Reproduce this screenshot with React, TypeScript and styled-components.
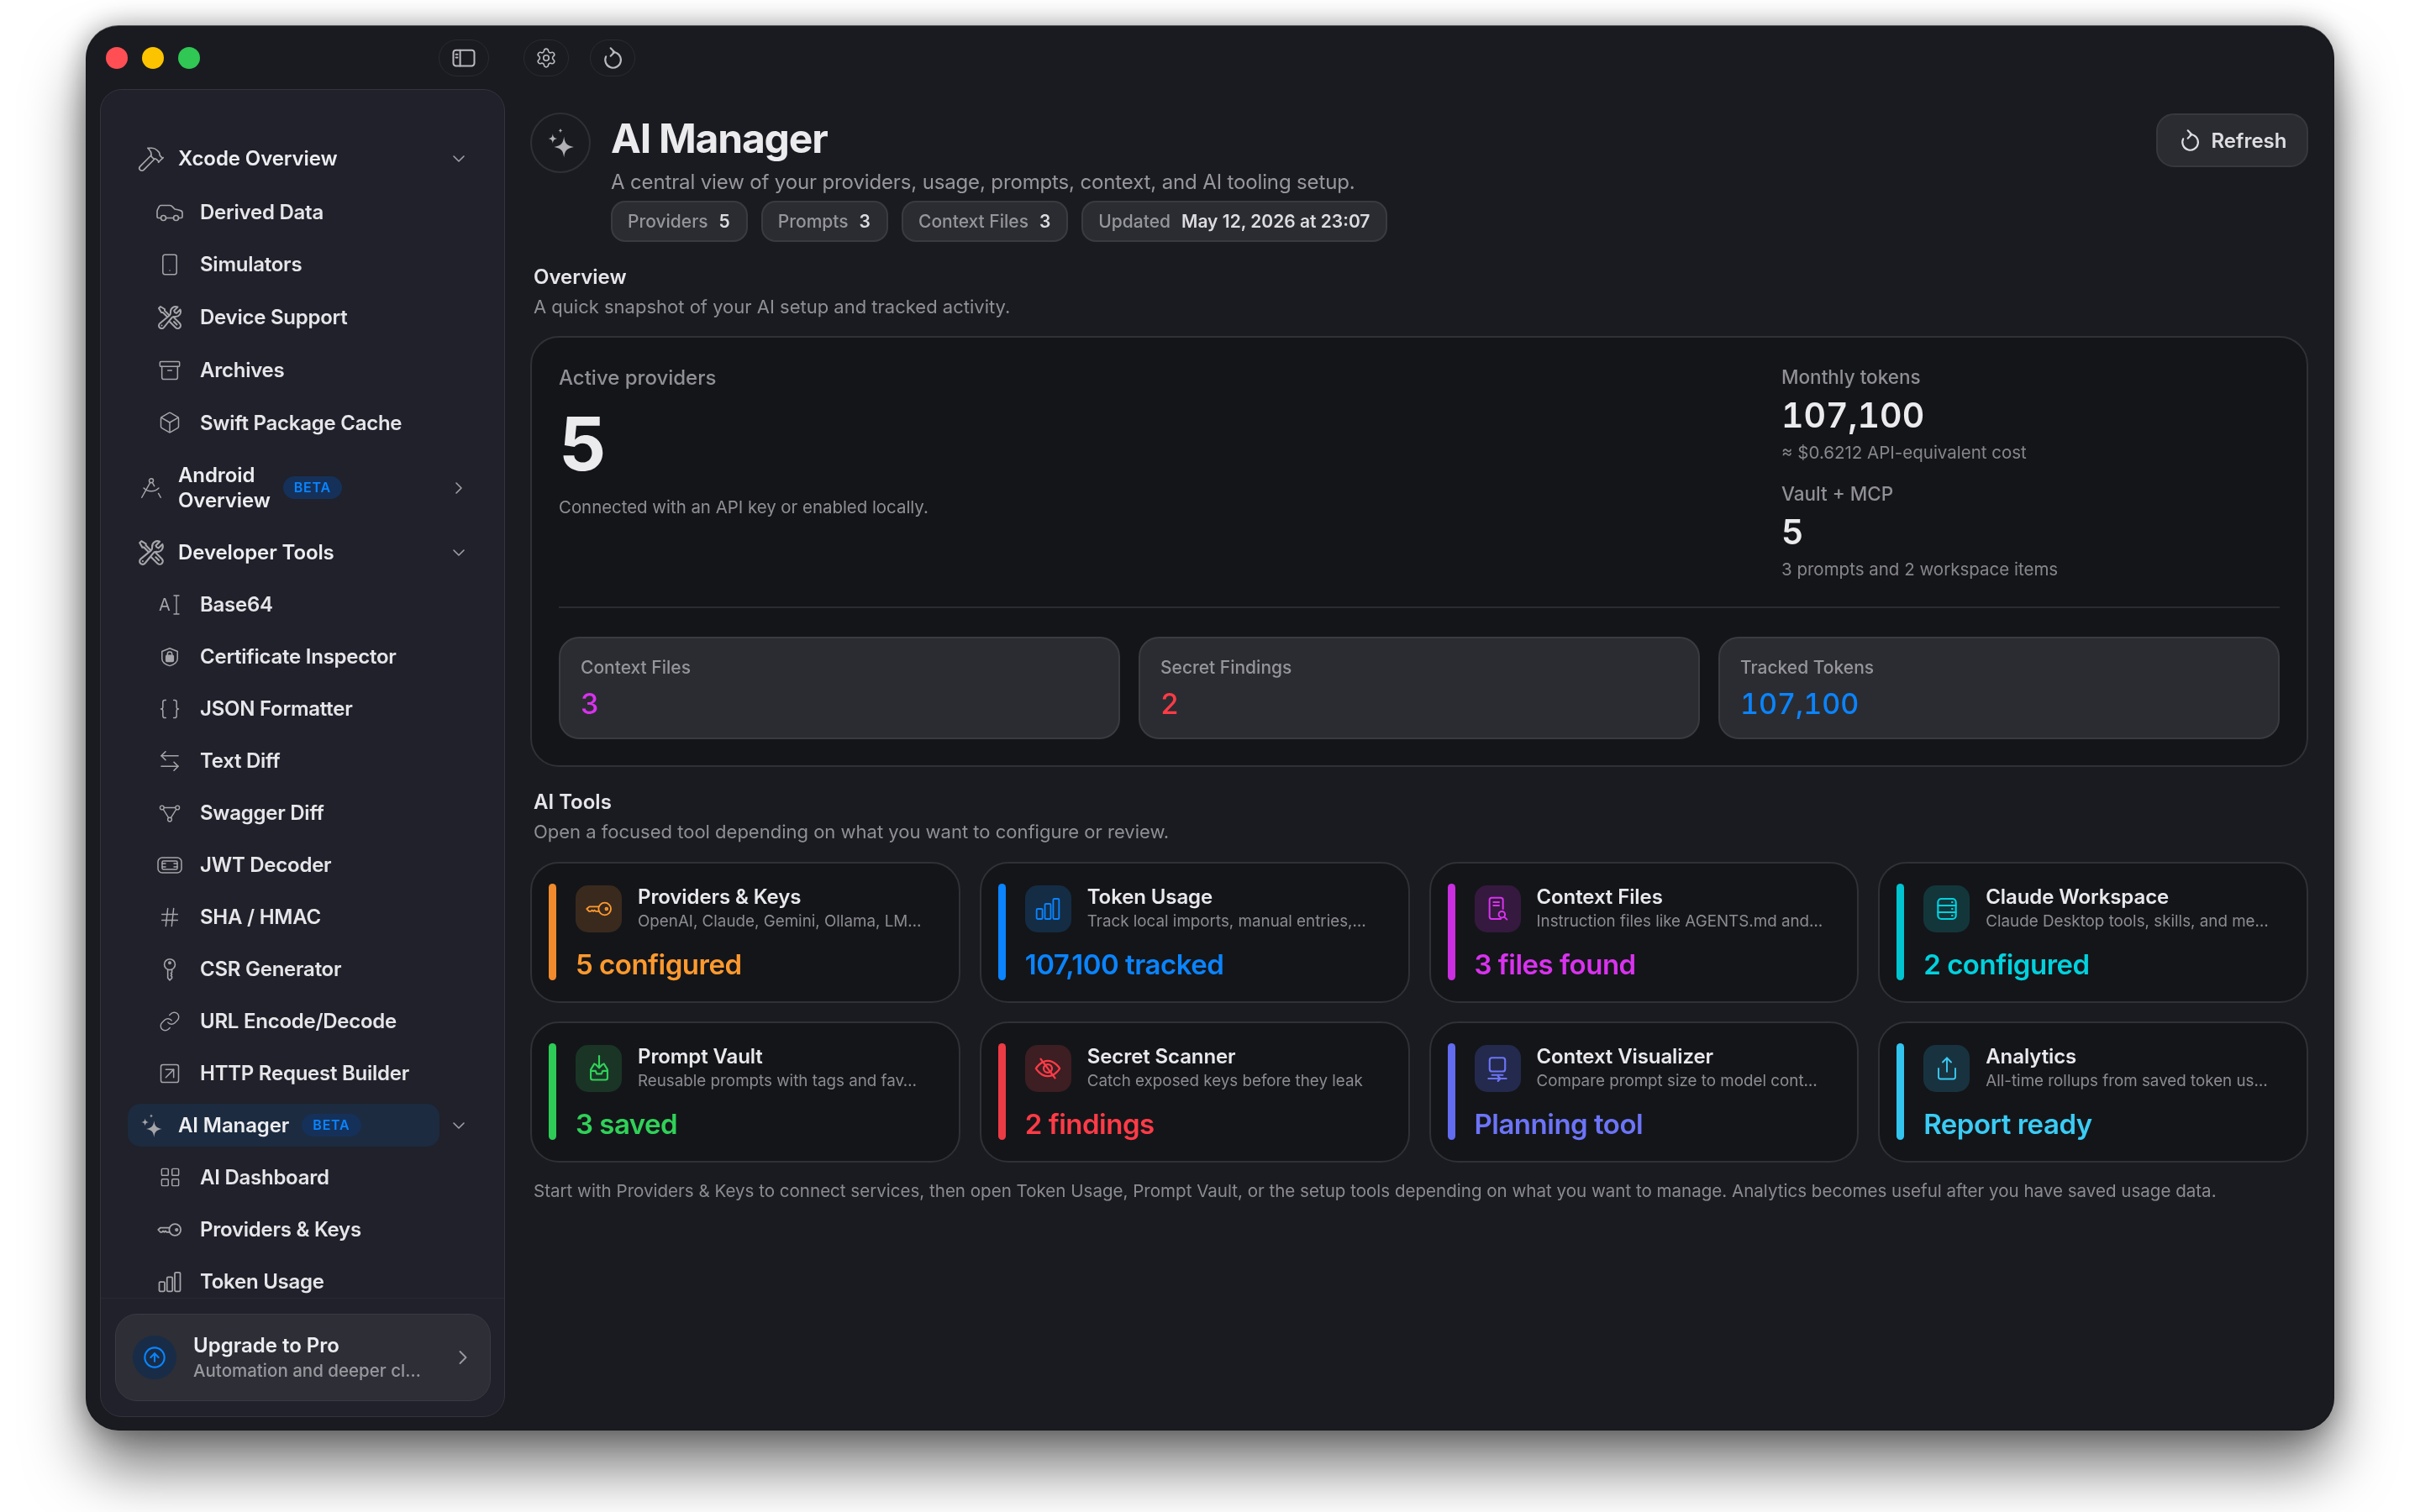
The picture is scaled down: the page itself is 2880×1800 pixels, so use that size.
import React from 'react';
import styled, { createGlobalStyle } from 'styled-components';
import {
  Archive,
  ArrowLeftRight,
  Box,
  Braces,
  Car,
  ChevronDown,
  ChevronRight,
  CircleArrowUp,
  DraftingCompass,
  Hammer,
  Hash,
  LayoutGrid,
  Link,
  Settings,
  Share,
  Smartphone,
  SquareArrowUpRight,
} from 'lucide-react';
import { HiOutlineWrenchScrewdriver } from 'react-icons/hi2';

const GlobalStyle = createGlobalStyle`
  html, body {
    margin: 0;
    padding: 0;
    background: #ffffff;
    font-family: Inter, "Noto Sans", sans-serif;
  }
  * { box-sizing: border-box; }
`;

type IconProps = { size?: number };

const Svg: React.FC<IconProps & { children: React.ReactNode; sw?: number }> = ({ size = 28, children, sw = 1.4 }) => (
  <svg
    width={size}
    height={size}
    viewBox="0 0 24 24"
    fill="none"
    stroke="currentColor"
    strokeWidth={sw}
    strokeLinecap="round"
    strokeLinejoin="round"
  >
    {children}
  </svg>
);

const SparklesIcon: React.FC<IconProps> = ({ size = 32 }) => (
  <svg width={size} height={size} viewBox="0 0 24 24" fill="currentColor">
    <path d="M14.5 7.5c.6 5 2 6.6 7 7.5-5 .9-6.4 2.5-7 7.5-.6-5-2-6.6-7-7.5 5-.9 6.4-2.5 7-7.5Z" />
    <path d="M6.5 5.5c.3 2.4 1 3.1 3.3 3.5-2.3.4-3 1.1-3.3 3.5-.3-2.4-1-3.1-3.3-3.5 2.3-.4 3-1.1 3.3-3.5Z" />
    <path d="M12 1.5c.15 1.2.5 1.6 1.6 1.8-1.1.2-1.45.6-1.6 1.8-.15-1.2-.5-1.6-1.6-1.8 1.1-.2 1.45-.6 1.6-1.8Z" />
  </svg>
);

const RefreshIcon: React.FC<IconProps> = ({ size = 30 }) => (
  <Svg size={size} sw={1.8}>
    <path d="M12.5 6a8 8 0 1 1-7.2 4.5" />
    <path d="m10 2 4 4-4 4" />
  </Svg>
);

const SidebarToggleIcon: React.FC = () => (
  <Svg size={30} sw={1.6}>
    <rect x="2" y="4.5" width="20" height="15" rx="2.5" />
    <path d="M8.5 4.5v15" />
    <path d="M4.5 8.5H6M4.5 11.5H6" />
  </Svg>
);

const KeyIcon: React.FC<IconProps & { upright?: boolean }> = ({ size = 30, upright }) => (
  <Svg size={size} sw={1.4}>
    <g transform={upright ? 'rotate(-90 12 12)' : undefined}>
      <circle cx="17" cy="12" r="5.5" />
      <circle cx="18.6" cy="12" r="1" />
      <path d="M11.8 10H3.2L1 12l2 2.2h1.6l1.1-1 1.1 1 1.1-1 1.1 1h3" />
    </g>
  </Svg>
);

const BarsIcon: React.FC<IconProps> = ({ size = 30 }) => (
  <Svg size={size} sw={1.4}>
    <rect x="2" y="12" width="5.2" height="9" rx="1" />
    <rect x="9.4" y="7.5" width="5.2" height="13.5" rx="1" />
    <rect x="16.8" y="3" width="5.2" height="18" rx="1" />
  </Svg>
);

const IBeamIcon: React.FC = () => (
  <svg width="26" height="28" viewBox="0 0 26 28" fill="none" stroke="currentColor" strokeWidth={1.4} strokeLinecap="round">
    <text x="0" y="21" fontSize="20" fontFamily="Inter, sans-serif" fill="currentColor" stroke="none">A</text>
    <path d="M18 3h6M21 3v22M18 25h6" />
  </svg>
);

const LockShieldIcon: React.FC = () => (
  <Svg size={26}>
    <path d="M12 2.5 20.5 6v8c0 3.8-3.5 6.2-8.5 7.8C7 20.2 3.5 17.8 3.5 14V6L12 2.5Z" />
    <rect x="8" y="10.5" width="8" height="6.5" rx="1" fill="currentColor" />
    <path d="M9.5 10.5V9a2.5 2.5 0 0 1 5 0v1.5" />
  </Svg>
);

const ConnectedIcon: React.FC = () => (
  <Svg size={26} sw={1.3}>
    <circle cx="3.5" cy="6" r="2.2" />
    <circle cx="20.5" cy="6" r="2.2" />
    <circle cx="12" cy="19" r="2.2" />
    <path d="M6 6h12M5 8l5.6 9M19 8l-5.6 9" />
  </Svg>
);

const TokenCardIcon: React.FC = () => (
  <svg width="30" height="24" viewBox="0 0 30 24" fill="none" stroke="currentColor" strokeWidth={1.5} strokeLinecap="round">
    <rect x="1" y="3" width="28" height="18" rx="5" />
    <rect x="6" y="7" width="18" height="10" rx="1.5" />
    <path d="M6 10h4M6 14h4M20 10h4M20 14h4" />
  </svg>
);

const DocSearchIcon: React.FC = () => (
  <Svg size={32} sw={1.5}>
    <path d="M15 21H7a2 2 0 0 1-2-2V4a2 2 0 0 1 2-2h8a2 2 0 0 1 2 2v8" />
    <path d="M8.5 6h5M8.5 9h5" />
    <circle cx="16" cy="17" r="2.8" />
    <path d="m18.2 19.2 2.3 2.3" />
  </Svg>
);

const RackIcon: React.FC = () => (
  <Svg size={32} sw={1.6}>
    <rect x="4" y="3" width="16" height="18" rx="3" />
    <path d="M4 9h16M4 15h16" />
    <path d="M16.5 6h.5M16.5 12h.5M16.5 18h.5" />
  </Svg>
);

const TrayDownIcon: React.FC = () => (
  <Svg size={34} sw={1.5}>
    <path d="M12 1.5v10" />
    <path d="m9 8.5 3 3 3-3" />
    <path d="M8 8 5 13v7a1.5 1.5 0 0 0 1.5 1.5h11A1.5 1.5 0 0 0 19 20v-7l-3-5" />
    <path d="M5 14h4l1 2.5h4l1-2.5h4" />
  </Svg>
);

const LaptopArrowIcon: React.FC = () => (
  <Svg size={34} sw={1.5}>
    <rect x="5.5" y="3" width="13" height="11.5" rx="2" />
    <path d="M7.5 17.5h9" />
    <path d="M4.5 20.5h15" />
    <path d="m12.5 18.5 2 2-2 2" />
  </Svg>
);

const EyeSlashIcon: React.FC = () => (
  <Svg size={34} sw={1.6}>
    <path d="M2 12s4-6.5 10-6.5S22 12 22 12s-4 6.5-10 6.5S2 12 2 12Z" />
    <circle cx="12" cy="12" r="3.5" />
    <path d="m6 4 12 16" />
  </Svg>
);

const Page = styled.div`
  width: 2880px;
  height: 1800px;
  padding: 32px 103px 0;
  background: #ffffff;
  overflow: hidden;
`;

const Window = styled.div`
  display: flex;
  flex-direction: column;
  width: 2674px;
  height: 1670px;
  border-radius: 38px;
  background: #1a1b20;
  box-shadow:
    0 0 0 1px #17181b,
    0 -1px 0 1px #55565a,
    0 46px 70px rgba(0, 0, 0, 0.52),
    0 0 34px rgba(0, 0, 0, 0.38);
  overflow: hidden;
  color: #e9e9ec;
  filter: blur(0.6px);
`;

const TitleBar = styled.div`
  display: flex;
  align-items: center;
  flex: 0 0 74px;
`;

const TitleLeft = styled.div`
  display: flex;
  align-items: center;
  justify-content: space-between;
  width: 497px;
  padding: 0 18px 0 23px;
`;

const Lights = styled.div`
  display: flex;
  gap: 17px;
`;

const Light = styled.span<{ $color: string }>`
  width: 26px;
  height: 26px;
  border-radius: 50%;
  background: ${p => p.$color};
`;

const ChromeButton = styled.button<{ $wide?: boolean }>`
  display: flex;
  align-items: center;
  justify-content: center;
  width: ${p => (p.$wide ? '60px' : '54px')};
  height: 44px;
  padding: 0;
  border: 1.5px solid #2a2b30;
  border-radius: 22px;
  background: transparent;
  color: #b9b9be;
`;

const ChromeGroup = styled.div`
  display: flex;
  gap: 25px;
  margin-left: 23px;
`;

const Body = styled.div`
  display: flex;
  flex: 1;
  min-height: 0;
  padding: 0 30px 15px 16px;
  gap: 30px;
`;

const Sidebar = styled.aside`
  display: flex;
  flex-direction: column;
  flex: 0 0 482px;
  border: 1.5px solid #33343e;
  border-radius: 26px;
  background: #20212a;
  overflow: hidden;
`;

const NavList = styled.nav`
  flex: 1;
  min-height: 0;
  padding: 51px 0 0 32px;
  overflow: hidden;
`;

const Row = styled.div<{ $h?: number }>`
  display: flex;
  align-items: center;
  height: ${p => p.$h ?? 62}px;
`;

const HeadMain = styled.div<{ $active?: boolean }>`
  display: flex;
  align-items: center;
  width: 371px;
  height: 51px;
  border-radius: 15px;
  background: ${p => (p.$active ? '#1c2b3f' : 'transparent')};
`;

const HeadIcon = styled.span`
  display: flex;
  align-items: center;
  justify-content: center;
  flex: 0 0 56px;
  color: #a5a5aa;
`;

const HeadLabel = styled.span`
  margin-left: 4px;
  font-size: 24px;
  line-height: 30px;
  font-weight: 600;
  letter-spacing: -0.1px;
  color: #ecedf0;
`;

const Beta = styled.span`
  margin-left: 15px;
  padding: 0 13px;
  height: 27px;
  line-height: 27px;
  border-radius: 14px;
  background: #15315a;
  color: #0a84ff;
  font-size: 16px;
  font-weight: 600;
  letter-spacing: 0.8px;
`;

const HeadChevron = styled.span`
  display: flex;
  justify-content: center;
  flex: 0 0 46px;
  color: #a0a0a6;
`;

const SubIcon = styled.span`
  display: flex;
  align-items: center;
  justify-content: center;
  flex: 0 0 36px;
  margin-left: 32px;
  color: #a5a5aa;
`;

const SubLabel = styled.span`
  margin-left: 18px;
  font-size: 24px;
  font-weight: 600;
  letter-spacing: -0.25px;
  color: #e6e6ea;
`;

const SidebarFoot = styled.div`
  flex: 0 0 141px;
  padding: 18px 16px 0 17px;
  border-top: 1.5px solid #272831;
`;

const UpgradeCard = styled.div`
  display: flex;
  align-items: center;
  height: 104px;
  padding: 0 18px 0 20px;
  border: 1.5px solid #3a3b42;
  border-radius: 26px;
  background: #2d2e36;
`;

const UpgradeBadge = styled.span`
  display: flex;
  align-items: center;
  justify-content: center;
  flex: 0 0 52px;
  height: 52px;
  border-radius: 50%;
  background: #182c47;
  color: #0a84ff;
`;

const UpgradeText = styled.div`
  flex: 1;
  margin-left: 20px;
`;

const UpgradeTitle = styled.div`
  font-size: 24px;
  line-height: 30px;
  font-weight: 600;
  color: #ecedf0;
`;

const UpgradeSub = styled.div`
  margin-top: 1px;
  font-size: 20.5px;
  line-height: 28px;
  font-weight: 500;
  color: #97979d;
`;

const Main = styled.main`
  flex: 1;
  min-width: 0;
  padding-top: 28px;
`;

const Header = styled.header`
  display: flex;
  align-items: flex-start;
`;

const HeaderBadge = styled.span`
  display: flex;
  align-items: center;
  justify-content: center;
  flex: 0 0 72px;
  height: 72px;
  border: 2px solid #2f3035;
  border-radius: 50%;
  color: #b0b0b5;
`;

const HeaderText = styled.div`
  flex: 1;
  margin-left: 24px;
`;

const Title = styled.h1`
  margin: 0;
  padding-top: 1px;
  font-size: 48px;
  line-height: 60px;
  font-weight: 700;
  letter-spacing: -1.2px;
  color: #ebebee;
`;

const Subtitle = styled.p`
  margin: 6px 0 0;
  font-size: 24px;
  line-height: 32px;
  letter-spacing: -0.14px;
  color: #97979d;
`;

const Pills = styled.div`
  display: flex;
  gap: 16px;
  margin-top: 6px;
`;

const Pill = styled.span`
  display: flex;
  align-items: center;
  gap: 13px;
  height: 49px;
  padding: 0 19px 0 18px;
  border: 2px solid #3a3b41;
  border-radius: 17px;
  background: #2b2c31;
  font-size: 21px;
  font-weight: 500;
  color: #95959b;
`;

const PillValue = styled.b`
  font-weight: 600;
  color: #dcdce0;
`;

const RefreshButton = styled.button`
  display: flex;
  align-items: center;
  justify-content: center;
  gap: 12px;
  width: 181px;
  height: 64px;
  margin-top: 1px;
  border: 2px solid #37383e;
  border-radius: 21px;
  background: #2b2c31;
  color: #dedee2;
  font-family: inherit;
  font-size: 24px;
  font-weight: 600;
`;

const Section = styled.section<{ $top: number }>`
  margin-top: ${p => p.$top}px;
  padding-left: 4px;
`;

const SectionTitle = styled.h2`
  margin: 0;
  font-size: 24px;
  line-height: 30px;
  font-weight: 600;
  color: #e6e6ea;
`;

const SectionSub = styled.p`
  margin: 6px 0 0;
  font-size: 22px;
  line-height: 28px;
  color: #8f8f95;
`;

const Panel = styled.div`
  height: 513px;
  margin-top: 21px;
  padding: 33px 32px 0;
  border: 2px solid #303136;
  border-radius: 34px;
  background: #141519;
`;

const PanelTop = styled.div`
  display: flex;
  justify-content: space-between;
  height: 289px;
  border-bottom: 2px solid #2b2c31;
`;

const PrimaryStat = styled.div``;

const MutedLabel = styled.div`
  font-size: 24px;
  line-height: 30px;
  font-weight: 500;
  color: #8f8f95;
`;

const BigNumber = styled.div`
  margin-top: 13px;
  font-size: 88px;
  line-height: 100px;
  font-weight: 700;
  color: #ebebee;
`;

const Caption = styled.div`
  margin-top: 12px;
  font-size: 20.4px;
  line-height: 28px;
  color: #8f8f95;
`;

const SideStats = styled.div`
  flex: 0 0 593px;
`;

const SideLabel = styled.div<{ $top?: number }>`
  margin-top: ${p => p.$top ?? 0}px;
  font-size: 22.5px;
  line-height: 28px;
  font-weight: 500;
  color: #8f8f95;
`;

const SideValue = styled.div`
  margin-top: 6px;
  font-size: 41px;
  line-height: 50px;
  font-weight: 600;
  font-variant-numeric: tabular-nums;
  color: #ebebee;
`;

const SideNote = styled.div`
  margin-top: 6px;
  font-size: 20.5px;
  line-height: 28px;
  color: #86868c;
`;

const StatGrid = styled.div`
  display: grid;
  grid-template-columns: repeat(3, 1fr);
  gap: 22px;
  margin-top: 34px;
`;

const StatCard = styled.div`
  height: 122px;
  padding: 22px 24px 0;
  border: 2px solid #3a3b41;
  border-radius: 24px;
  background: #2b2c31;
`;

const StatLabel = styled.div`
  font-size: 21px;
  line-height: 26px;
  font-weight: 500;
  color: #95959b;
`;

const StatValue = styled.div<{ $color: string }>`
  margin-top: 8px;
  font-size: 34px;
  line-height: 44px;
  font-weight: 500;
  font-variant-numeric: tabular-nums;
  color: ${p => p.$color};
`;

const ToolGrid = styled.div`
  display: grid;
  grid-template-columns: repeat(4, 1fr);
  gap: 22px 23px;
  margin-top: 22px;
`;

const ToolCard = styled.div`
  display: flex;
  gap: 23px;
  height: 168px;
  padding: 24px 20px 0;
  border: 2px solid #303136;
  border-radius: 34px;
  background: #141519;
  min-width: 0;
`;

const Accent = styled.span<{ $color: string }>`
  flex: 0 0 9px;
  height: 115px;
  border-radius: 5px;
  background: ${p => p.$color};
`;

const ToolBody = styled.div`
  flex: 1;
  min-width: 0;
  padding-top: 2px;
`;

const ToolTop = styled.div`
  display: flex;
  gap: 19px;
`;

const ToolTile = styled.span<{ $bg: string; $color: string }>`
  display: flex;
  align-items: center;
  justify-content: center;
  flex: 0 0 55px;
  height: 56px;
  border-radius: 15px;
  background: ${p => p.$bg};
  color: ${p => p.$color};
`;

const ToolText = styled.div`
  min-width: 0;
`;

const ToolTitle = styled.div`
  margin-top: -1px;
  font-size: 24px;
  line-height: 30px;
  font-weight: 600;
  letter-spacing: -0.1px;
  color: #e9e9ec;
`;

const ToolDesc = styled.div`
  margin-top: 1px;
  font-size: 18.8px;
  line-height: 26px;
  white-space: nowrap;
  color: #8b8b91;
`;

const ToolValue = styled.div<{ $color: string }>`
  margin-top: 17px;
  font-size: 33px;
  line-height: 42px;
  font-weight: 600;
  letter-spacing: -0.5px;
  color: ${p => p.$color};
`;

const Note = styled.p`
  margin: 0;
  font-size: 20.55px;
  line-height: 28px;
  white-space: nowrap;
  color: #8b8b91;
`;

const tools = [
  { title: 'Providers & Keys', desc: 'OpenAI, Claude, Gemini, Ollama, LM…', value: '5 configured', color: '#ff9a2e', bar: '#f08a2c', bg: '#3a2a1e', icon: <KeyIcon size={32} /> },
  { title: 'Token Usage', desc: 'Track local imports, manual entries,…', value: '107,100 tracked', color: '#0a84ff', bar: '#0a84ff', bg: '#142d45', icon: <BarsIcon size={32} /> },
  { title: 'Context Files', desc: 'Instruction files like AGENTS.md and…', value: '3 files found', color: '#d932ef', bar: '#c92fdf', bg: '#36193f', icon: <DocSearchIcon /> },
  { title: 'Claude Workspace', desc: 'Claude Desktop tools, skills, and me…', value: '2 configured', color: '#00d2de', bar: '#00c4cf', bg: '#13363b', icon: <RackIcon /> },
  { title: 'Prompt Vault', desc: 'Reusable prompts with tags and fav…', value: '3 saved', color: '#30d158', bar: '#2ecc57', bg: '#1a3526', icon: <TrayDownIcon /> },
  { title: 'Secret Scanner', desc: 'Catch exposed keys before they leak', value: '2 findings', color: '#ff3b47', bar: '#ec3b44', bg: '#3d1e22', icon: <EyeSlashIcon /> },
  { title: 'Context Visualizer', desc: 'Compare prompt size to model cont…', value: 'Planning tool', color: '#6c74f7', bar: '#626cf0', bg: '#242a4d', icon: <LaptopArrowIcon /> },
  { title: 'Analytics', desc: 'All-time rollups from saved token us…', value: 'Report ready', color: '#3accf5', bar: '#32c5f0', bg: '#18333f', icon: <Share size={30} strokeWidth={1.5} /> },
];

const xcodeItems = [
  { label: 'Derived Data', icon: <Car size={36} strokeWidth={1.1} /> },
  { label: 'Simulators', icon: <Smartphone size={28} strokeWidth={1.3} /> },
  { label: 'Device Support', icon: <HiOutlineWrenchScrewdriver size={32} /> },
  { label: 'Archives', icon: <Archive size={28} strokeWidth={1.3} /> },
  { label: 'Swift Package Cache', icon: <Box size={28} strokeWidth={1.3} /> },
];

const devItems = [
  { label: 'Base64', icon: <IBeamIcon /> },
  { label: 'Certificate Inspector', icon: <LockShieldIcon /> },
  { label: 'JSON Formatter', icon: <Braces size={28} strokeWidth={1.3} /> },
  { label: 'Text Diff', icon: <ArrowLeftRight size={30} strokeWidth={1.3} /> },
  { label: 'Swagger Diff', icon: <ConnectedIcon /> },
  { label: 'JWT Decoder', icon: <TokenCardIcon /> },
  { label: 'SHA / HMAC', icon: <Hash size={28} strokeWidth={1.3} /> },
  { label: 'CSR Generator', icon: <KeyIcon size={28} upright /> },
  { label: 'URL Encode/Decode', icon: <Link size={26} strokeWidth={1.3} /> },
  { label: 'HTTP Request Builder', icon: <SquareArrowUpRight size={28} strokeWidth={1.3} /> },
];

const aiItems = [
  { label: 'AI Dashboard', icon: <LayoutGrid size={27} strokeWidth={1.3} /> },
  { label: 'Providers & Keys', icon: <KeyIcon size={30} /> },
  { label: 'Token Usage', icon: <BarsIcon size={30} /> },
];

const App: React.FC = () => {
  const renderSub = (items: { label: string; icon: React.ReactNode }[], h?: number) =>
    items.map(item => (
      <Row key={item.label} $h={h}>
        <SubIcon>{item.icon}</SubIcon>
        <SubLabel>{item.label}</SubLabel>
      </Row>
    ));

  return (
    <Page>
      <GlobalStyle />
      <Window>
        <TitleBar>
          <TitleLeft>
            <Lights>
              <Light $color="#ff4f54" />
              <Light $color="#fcc400" />
              <Light $color="#30c754" />
            </Lights>
            <ChromeButton $wide>
              <SidebarToggleIcon />
            </ChromeButton>
          </TitleLeft>
          <ChromeGroup>
            <ChromeButton>
              <Settings size={26} strokeWidth={1.5} />
            </ChromeButton>
            <ChromeButton>
              <RefreshIcon size={28} />
            </ChromeButton>
          </ChromeGroup>
        </TitleBar>
        <Body>
          <Sidebar>
            <NavList>
              <Row $h={62.8}>
                <HeadMain>
                  <HeadIcon><Hammer size={34} strokeWidth={1.2} /></HeadIcon>
                  <HeadLabel>Xcode Overview</HeadLabel>
                </HeadMain>
                <HeadChevron><ChevronDown size={24} strokeWidth={1.6} /></HeadChevron>
              </Row>
              {renderSub(xcodeItems, 62.8)}
              <Row $h={92}>
                <HeadMain>
                  <HeadIcon><DraftingCompass size={30} strokeWidth={1.2} /></HeadIcon>
                  <HeadLabel>Android<br />Overview</HeadLabel>
                  <Beta>BETA</Beta>
                </HeadMain>
                <HeadChevron><ChevronRight size={24} strokeWidth={1.6} /></HeadChevron>
              </Row>
              <Row>
                <HeadMain>
                  <HeadIcon><HiOutlineWrenchScrewdriver size={34} /></HeadIcon>
                  <HeadLabel>Developer Tools</HeadLabel>
                </HeadMain>
                <HeadChevron><ChevronDown size={24} strokeWidth={1.6} /></HeadChevron>
              </Row>
              {renderSub(devItems)}
              <Row>
                <HeadMain $active>
                  <HeadIcon><SparklesIcon /></HeadIcon>
                  <HeadLabel>AI Manager</HeadLabel>
                  <Beta>BETA</Beta>
                </HeadMain>
                <HeadChevron><ChevronDown size={24} strokeWidth={1.6} /></HeadChevron>
              </Row>
              {renderSub(aiItems)}
            </NavList>
            <SidebarFoot>
              <UpgradeCard>
                <UpgradeBadge><CircleArrowUp size={28} strokeWidth={1.8} /></UpgradeBadge>
                <UpgradeText>
                  <UpgradeTitle>Upgrade to Pro</UpgradeTitle>
                  <UpgradeSub>Automation and deeper cl…</UpgradeSub>
                </UpgradeText>
                <ChevronRight size={28} strokeWidth={1.6} color="#9a9aa0" />
              </UpgradeCard>
            </SidebarFoot>
          </Sidebar>
          <Main>
            <Header>
              <HeaderBadge><SparklesIcon size={40} /></HeaderBadge>
              <HeaderText>
                <Title>AI Manager</Title>
                <Subtitle>A central view of your providers, usage, prompts, context, and AI tooling setup.</Subtitle>
                <Pills>
                  <Pill>Providers <PillValue>5</PillValue></Pill>
                  <Pill>Prompts <PillValue>3</PillValue></Pill>
                  <Pill>Context Files <PillValue>3</PillValue></Pill>
                  <Pill>Updated <PillValue>May 12, 2026 at 23:07</PillValue></Pill>
                </Pills>
              </HeaderText>
              <RefreshButton><RefreshIcon size={28} />Refresh</RefreshButton>
            </Header>
            <Section $top={27}>
              <SectionTitle>Overview</SectionTitle>
              <SectionSub>A quick snapshot of your AI setup and tracked activity.</SectionSub>
            </Section>
            <Panel>
              <PanelTop>
                <PrimaryStat>
                  <MutedLabel>Active providers</MutedLabel>
                  <BigNumber>5</BigNumber>
                  <Caption>Connected with an API key or enabled locally.</Caption>
                </PrimaryStat>
                <SideStats>
                  <SideLabel>Monthly tokens</SideLabel>
                  <SideValue>107,100</SideValue>
                  <SideNote>≈ $0.6212 API-equivalent cost</SideNote>
                  <SideLabel $top={21}>Vault + MCP</SideLabel>
                  <SideValue>5</SideValue>
                  <SideNote>3 prompts and 2 workspace items</SideNote>
                </SideStats>
              </PanelTop>
              <StatGrid>
                <StatCard>
                  <StatLabel>Context Files</StatLabel>
                  <StatValue $color="#d932ef">3</StatValue>
                </StatCard>
                <StatCard>
                  <StatLabel>Secret Findings</StatLabel>
                  <StatValue $color="#ff3b47">2</StatValue>
                </StatCard>
                <StatCard>
                  <StatLabel>Tracked Tokens</StatLabel>
                  <StatValue $color="#0a84ff">107,100</StatValue>
                </StatCard>
              </StatGrid>
            </Panel>
            <Section $top={27}>
              <SectionTitle>AI Tools</SectionTitle>
              <SectionSub>Open a focused tool depending on what you want to configure or review.</SectionSub>
            </Section>
            <ToolGrid>
              {tools.map(tool => (
                <ToolCard key={tool.title}>
                  <Accent $color={tool.bar} />
                  <ToolBody>
                    <ToolTop>
                      <ToolTile $bg={tool.bg} $color={tool.color}>{tool.icon}</ToolTile>
                      <ToolText>
                        <ToolTitle>{tool.title}</ToolTitle>
                        <ToolDesc>{tool.desc}</ToolDesc>
                      </ToolText>
                    </ToolTop>
                    <ToolValue $color={tool.color}>{tool.value}</ToolValue>
                  </ToolBody>
                </ToolCard>
              ))}
            </ToolGrid>
            <Section $top={20}>
              <Note>Start with Providers &amp; Keys to connect services, then open Token Usage, Prompt Vault, or the setup tools depending on what you want to manage. Analytics becomes useful after you have saved usage data.</Note>
            </Section>
          </Main>
        </Body>
      </Window>
    </Page>
  );
};

export default App;
